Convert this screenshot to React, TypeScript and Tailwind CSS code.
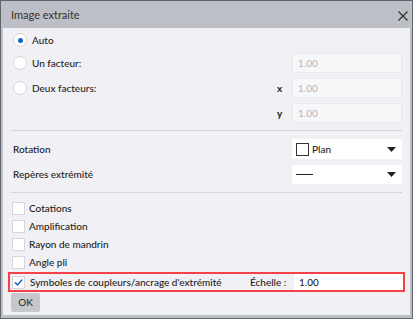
import * as React from 'react'

function Radio({ checked }: { checked?: boolean }) {
  return (
    <span className="flex h-[14px] w-[14px] shrink-0 items-center justify-center rounded-full border border-[#d6d6dc] bg-white">
      {checked && <span className="h-[5px] w-[5px] rounded-full bg-[#1664c0]" />}
    </span>
  )
}

function Check({ checked }: { checked?: boolean }) {
  return (
    <span className="flex h-[13px] w-[13px] shrink-0 items-center justify-center border border-[#d6d6dc] bg-white">
      {checked && (
        <svg viewBox="0 0 12 12" className="h-[11px] w-[11px]" fill="none">
          <path d="M2.5 6.2L5 8.6L9.6 3.2" stroke="#1664c0" strokeWidth="1.6" strokeLinecap="round" strokeLinejoin="round" />
        </svg>
      )}
    </span>
  )
}

function DisabledInput() {
  return (
    <div className="flex h-[20px] w-[110px] items-center border border-[#e8e8ee] bg-[#f7f7f9] pl-[5px] text-[#b9b9c0]">
      1.00
    </div>
  )
}

function Caret() {
  return (
    <svg viewBox="0 0 9 5" className="h-[5px] w-[9px]">
      <path d="M0 0H9L4.5 5z" fill="#222" />
    </svg>
  )
}

export default function App() {
  const font = { fontFamily: 'Lato, "Noto Sans", sans-serif' }
  return (
    <div
      className="flex h-[319px] w-[413px] flex-col border border-[#5f646d] bg-[#bcbfc6] text-[10px] font-medium text-[#1e1e1e]"
      style={font}
    >
      {/* Title bar */}
      <div className="flex h-[27px] shrink-0 items-center justify-between pl-[10px] pr-[4px] pt-[2px]">
        <span className="text-[11px] font-normal text-[#333]">Image extraite</span>
        <svg viewBox="0 0 10 10" className="h-[10px] w-[10px]" fill="none">
          <path d="M0.5 0.5L9.5 9.5M9.5 0.5L0.5 9.5" stroke="#333" strokeWidth="1.3" />
        </svg>
      </div>

      {/* Content */}
      <div className="mx-[2px] mb-[3px] flex flex-1 flex-col bg-[#f0f0f5] px-[8px]">
        {/* Scale section */}
        <div className="flex flex-col pt-[5px]">
          <div className="flex h-[14px] items-center gap-[5px] pl-[2px]">
            <Radio checked />
            <span>Auto</span>
          </div>
          <div className="mt-[6px] flex h-[20px] items-center pl-[2px]">
            <Radio />
            <span className="ml-[5px] flex-1">Un facteur:</span>
            <DisabledInput />
          </div>
          <div className="mt-[5px] flex h-[20px] items-center pl-[2px]">
            <Radio />
            <span className="ml-[5px] flex-1">Deux facteurs:</span>
            <span className="w-[15px] font-bold">x</span>
            <DisabledInput />
          </div>
          <div className="mt-[5px] flex h-[20px] items-center justify-end">
            <span className="w-[15px] font-bold">y</span>
            <DisabledInput />
          </div>
        </div>

        <div className="mt-[7px] h-px bg-[#d4d4da]" />

        {/* Rotation section */}
        <div className="flex flex-col pt-[8px]">
          <div className="flex h-[20px] items-center pl-[2px]">
            <span className="flex-1">Rotation</span>
            <div className="flex h-[20px] w-[110px] items-center bg-white pl-[4px] pr-[6px]">
              <span className="h-[13px] w-[13px] border-[1.5px] border-[#333]" />
              <span className="ml-[3px] flex-1">Plan</span>
              <Caret />
            </div>
          </div>
          <div className="mt-[6px] flex h-[19px] items-center pl-[2px]">
            <span className="flex-1">Repères extrémité</span>
            <div className="flex h-[19px] w-[110px] items-center bg-white pl-[4px] pr-[6px]">
              <span className="h-[1.5px] w-[17px] bg-[#222]" />
              <span className="flex-1" />
              <Caret />
            </div>
          </div>
        </div>

        <div className="mt-[8px] h-px bg-[#d4d4da]" />

        {/* Options section */}
        <div className="flex flex-col pt-[9px]">
          {['Cotations', 'Amplification', 'Rayon de mandrin', 'Angle pli'].map((label) => (
            <div key={label} className="mb-[5px] flex h-[13px] items-center gap-[4px] pl-[1px]">
              <Check />
              <span>{label}</span>
            </div>
          ))}
        </div>

        <div className="-mx-[3px] mt-[-2px] flex h-[20px] items-center border-2 border-[#f44248] pl-[2px]">
          <Check checked />
          <span className="ml-[5px] flex-1 whitespace-nowrap">Symboles de coupleurs/ancrage d'extrémité</span>
          <span className="w-[44px] whitespace-nowrap">Échelle :</span>
          <div className="flex h-full w-[109px] items-center bg-white pl-[5px]">1.00</div>
        </div>

        <div className="mt-[1px] flex">
          <div className="flex h-[19px] w-[29px] items-center justify-center rounded-[2px] bg-[#c6c8ce] text-[#333]">
            OK
          </div>
        </div>
      </div>
    </div>
  )
}
